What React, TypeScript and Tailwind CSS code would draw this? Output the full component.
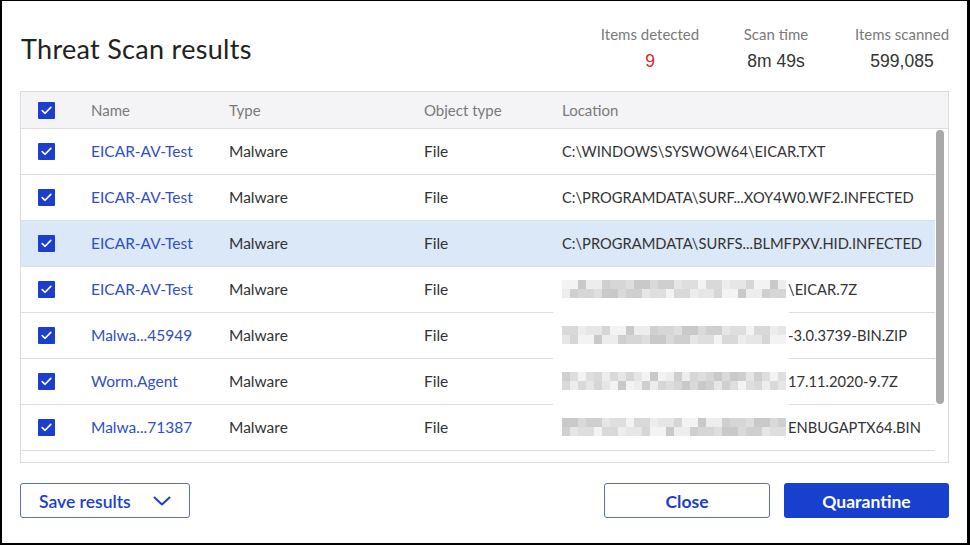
import React from 'react';

type Row = {
  name: string;
  location: string;
  masked?: boolean;
  selected?: boolean;
};

const rows: Row[] = [
  { name: 'EICAR-AV-Test', location: 'C:\\WINDOWS\\SYSWOW64\\EICAR.TXT' },
  { name: 'EICAR-AV-Test', location: 'C:\\PROGRAMDATA\\SURF...XOY4W0.WF2.INFECTED' },
  { name: 'EICAR-AV-Test', location: 'C:\\PROGRAMDATA\\SURFS...BLMFPXV.HID.INFECTED', selected: true },
  { name: 'EICAR-AV-Test', location: '\\EICAR.7Z', masked: true },
  { name: 'Malwa...45949', location: '-3.0.3739-BIN.ZIP', masked: true },
  { name: 'Worm.Agent', location: '17.11.2020-9.7Z', masked: true },
  { name: 'Malwa...71387', location: 'ENBUGAPTX64.BIN', masked: true },
];

const shades = ['#dedede', '#d6d6d6', '#e6e6e6', '#cfcfcf', '#ededed', '#d9d9d9', '#c9c9c9', '#f3f3f3'];

// pixelated redaction strip
const Mosaic: React.FC<{ seed: number }> = ({ seed }) => {
  const cells = Array.from({ length: 2 * 28 }, (_, i) => shades[(i * 7 + seed * 5 + ((i * i + seed) % 3)) % shades.length]);
  return (
    <div className="relative z-10 grid grid-cols-[repeat(28,8px)] grid-rows-[repeat(2,9px)] w-[226px] shrink-0">
      {cells.map((c, i) => (
        <div key={i} style={{ backgroundColor: c }} />
      ))}
    </div>
  );
};

const Checkbox: React.FC = () => (
  <div className="w-[17px] h-[17px] bg-[#1b3ecf] rounded-[1px] flex items-center justify-center">
    <svg width="11" height="9" viewBox="0 0 11 9" fill="none">
      <path d="M1.2 4.6 L4.1 7.3 L9.8 1.4" stroke="white" strokeWidth="1.6" strokeLinecap="round" strokeLinejoin="round" />
    </svg>
  </div>
);

const Stat: React.FC<{ label: string; value: string; red?: boolean }> = ({ label, value, red }) => (
  <div className="w-[126px] flex flex-col items-center">
    <span className="text-[15px] leading-[20px] text-[#7a7a7a] font-['Lato']">{label}</span>
    <span className={`mt-[6px] text-[17.5px] leading-[22px] font-['Liberation_Sans'] ${red ? 'text-[#e0262c]' : 'text-[#333]'}`}>{value}</span>
  </div>
);

export default function App() {
  return (
    <div className="w-[970px] h-[545px] bg-black pt-px pl-[2px] pr-[3px] pb-[2px] font-['Lato',sans-serif]">
      <div className="w-full h-full bg-white flex flex-col">
        {/* Header */}
        <div className="h-[90px] flex justify-between pl-[19px] pr-[2px]">
          <h1 className="pt-[32px] text-[27px] leading-[32px] text-[#222] font-normal tracking-[0.3px]">Threat Scan results</h1>
          <div className="flex pt-[23px]">
            <Stat label="Items detected" value="9" red />
            <Stat label="Scan time" value="8m 49s" />
            <Stat label="Items scanned" value="599,085" />
          </div>
        </div>

        {/* Table */}
        <div className="mx-[18px] h-[372px] border border-[#dcdcdc] flex flex-col">
          <div className="h-[37px] shrink-0 bg-[#f4f4f6] border-b border-[#dedede] flex items-center text-[15px] text-[#7a7a7a]">
            <div className="w-[70px] pl-[17px]"><Checkbox /></div>
            <div className="w-[138px]">Name</div>
            <div className="w-[195px]">Type</div>
            <div className="w-[138px]">Object type</div>
            <div>Location</div>
          </div>
          <div className="flex-1 flex overflow-hidden">
            <div className="relative w-[915px]">
              <div className="absolute left-[532px] top-[146px] w-[236px] h-[166px] bg-white rounded-[4px]" />
              {rows.map((r, i) => (
                <div
                  key={i}
                  className={`h-[46px] flex items-center border-b border-[#dedede] text-[15.5px] ${r.selected ? 'bg-[#dbe8f8]' : ''}`}
                >
                  <div className="w-[70px] pl-[17px]"><Checkbox /></div>
                  <div className="w-[138px] text-[#3050c2]">{r.name}</div>
                  <div className="w-[195px] text-[#333]">Malware</div>
                  <div className="w-[138px] text-[#333]">File</div>
                  <div className="flex items-center text-[#333] text-[14.7px] whitespace-nowrap">
                    {r.masked && <Mosaic seed={i} />}
                    <span className="relative z-10">{r.location}</span>
                  </div>
                </div>
              ))}
            </div>
            <div className="w-[13px] pt-[1px] pl-[1px]">
              <div className="w-[8px] h-[274px] bg-[#a9a9a9] rounded-[4px]" />
            </div>
          </div>
        </div>

        {/* Footer */}
        <div className="mx-[18px] mt-[20px] flex justify-between">
          <button className="w-[170px] h-[35px] pt-[3px] border border-[#5b6fcf] rounded-[3px] flex items-center pl-[18px] gap-[22px] text-[17.5px] font-semibold text-[#1b3ecf]">
            Save results
            <svg width="18" height="10" viewBox="0 0 18 10" fill="none" className="-mt-[3px]">
              <path d="M1.5 1.5 L9 8.5 L16.5 1.5" stroke="#1b3ecf" strokeWidth="2" strokeLinecap="round" strokeLinejoin="round" />
            </svg>
          </button>
          <div className="flex gap-[14px]">
            <button className="w-[166px] h-[35px] pt-[3px] border border-[#5b6fcf] rounded-[3px] text-[17.5px] font-bold text-[#1b3ecf]">Close</button>
            <button className="w-[165px] h-[35px] pt-[3px] bg-[#1740cf] rounded-[3px] text-[17.5px] font-bold text-white">Quarantine</button>
          </div>
        </div>
      </div>
    </div>
  );
}
